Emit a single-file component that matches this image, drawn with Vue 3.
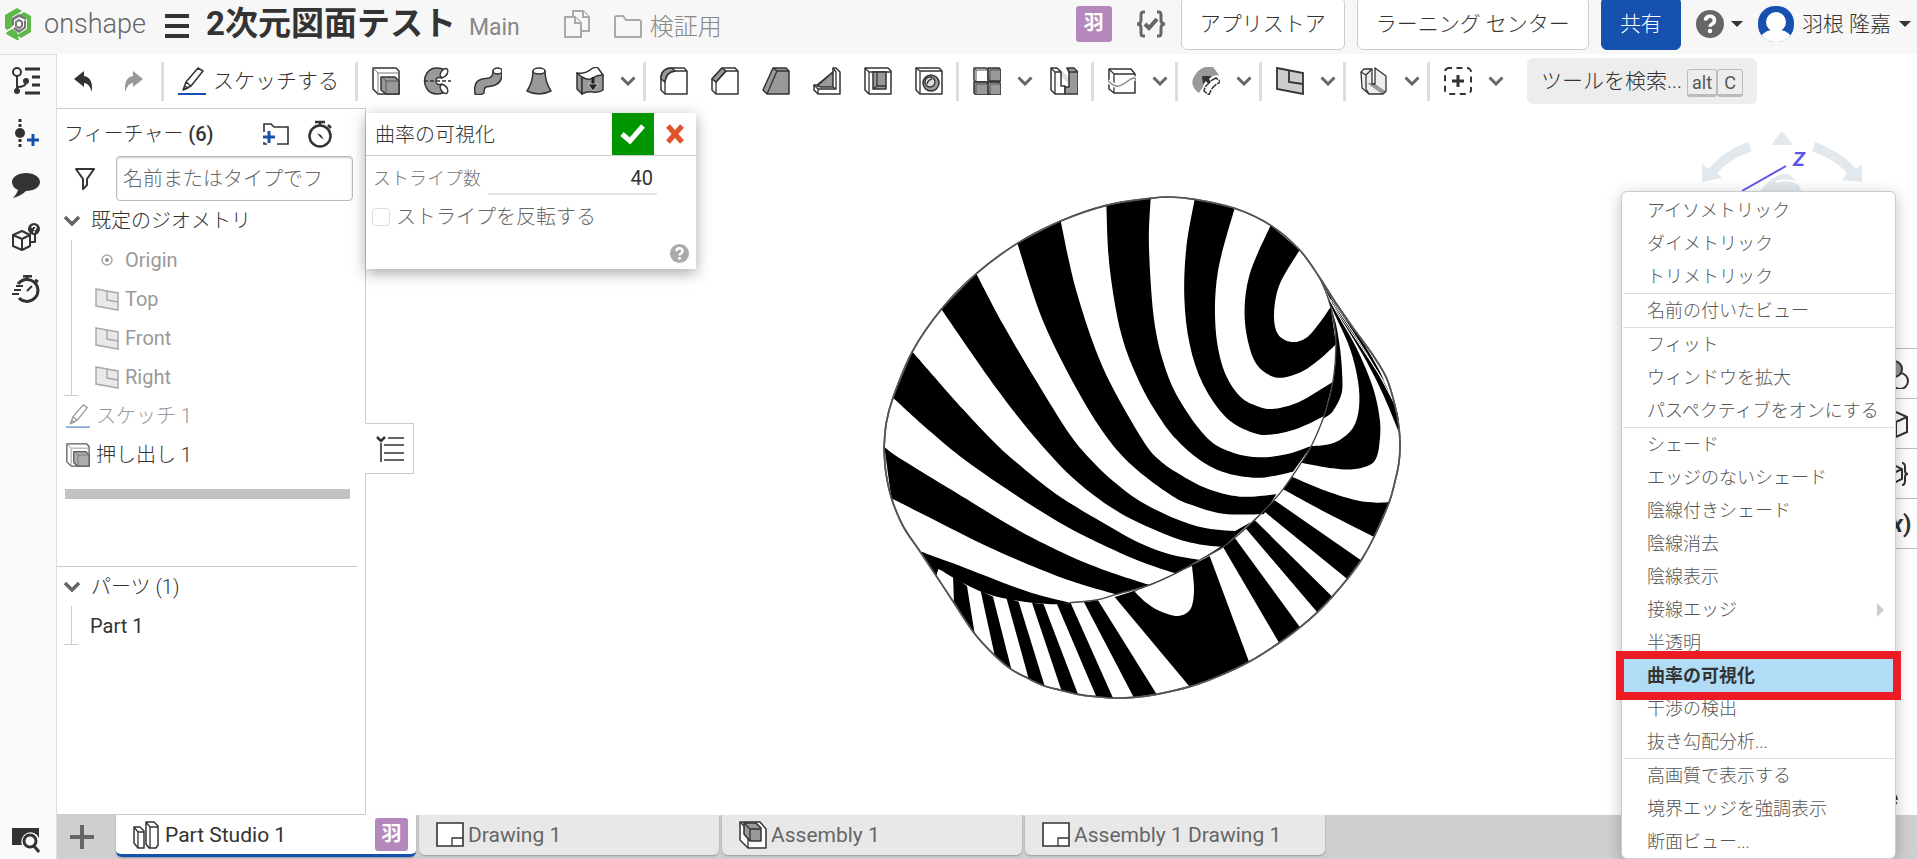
<template>
  <div class="app">
    <header class="topbar">
      <a href="#" class="brand" aria-label="onshape">
        <svg width="30" height="34" viewBox="0 0 30 34" v-html="icons.logo"></svg>
        <span class="brand-name">onshape</span>
      </a>
      <button class="plain burger" aria-label="メニュー">
        <svg width="24" height="24" viewBox="0 0 24 24"><path d="M0 2H24M0 12H24M0 22H24" stroke="#333" stroke-width="4" /></svg>
      </button>
      <h1>2次元図面テスト</h1>
      <span class="branch">Main</span>
      <svg class="copy" width="26" height="28" viewBox="0 0 26 28" v-html="icons.copy"></svg>
      <a href="#" class="folder">
        <svg width="28" height="24" viewBox="0 0 28 24" v-html="icons.folder"></svg>
        検証用
      </a>
      <div class="top-right">
        <span class="badge">羽</span>
        <svg class="braces" width="30" height="28" viewBox="0 0 30 28" v-html="icons.braces"></svg>
        <button class="top-btn store">アプリストア</button>
        <button class="top-btn learn">ラーニング センター</button>
        <button class="top-btn share">共有</button>
        <button class="plain help" aria-label="ヘルプ">
          <svg width="28" height="28" viewBox="0 0 20 20" v-html="icons.help"></svg>
          <i class="caret"></i>
        </button>
        <button class="plain user">
          <svg width="36" height="36" viewBox="0 0 36 36" v-html="icons.user"></svg>
          羽根 隆嘉
          <i class="caret"></i>
        </button>
      </div>
    </header>

    <div class="body">
      <nav class="rail">
        <button v-for="r in rail" :key="r" class="plain rail-btn" :class="{ last: r === 'find' }" :aria-label="r">
          <svg width="28" height="28" viewBox="0 0 28 28" v-html="icons[r]"></svg>
        </button>
      </nav>

      <div class="work">
        <div class="toolbar">
          <button class="plain tool" aria-label="undo"><svg width="28" height="28" viewBox="0 0 28 28" v-html="icons.undo"></svg></button>
          <button class="plain tool faded" aria-label="redo"><svg class="flip" width="28" height="28" viewBox="0 0 28 28" v-html="icons.undo"></svg></button>
          <i class="sep"></i>
          <button class="plain sketch">
            <svg width="28" height="28" viewBox="0 0 28 28" v-html="icons.pencil"></svg>
            スケッチする
          </button>
          <template v-for="(group, g) in tools" :key="g">
            <i class="sep"></i>
            <template v-for="(t, i) in group" :key="i">
              <button v-if="t === 'more'" class="plain more" aria-label="more">
                <svg width="16" height="10" viewBox="0 0 16 10"><path d="M1.5 1.5L8 8L14.5 1.5" fill="none" stroke="#666" stroke-width="3" /></svg>
              </button>
              <button v-else class="plain tool" :aria-label="t">
                <svg width="28" height="28" viewBox="0 0 28 28" v-html="icons[t]"></svg>
              </button>
            </template>
          </template>
          <button class="plain tool-search">ツールを検索... <kbd>alt</kbd><kbd>C</kbd></button>
        </div>

        <div class="stage">
          <aside class="sidebar">
            <div class="feature-head">
              <span>フィーチャー <b>(6)</b></span>
              <button class="plain" aria-label="フォルダを追加"><svg width="28" height="24" viewBox="0 0 28 24" v-html="icons.folderAdd"></svg></button>
              <button class="plain" aria-label="タイマー"><svg width="26" height="28" viewBox="0 0 26 28" v-html="icons.stopwatch"></svg></button>
            </div>
            <div class="filter">
              <svg width="26" height="26" viewBox="0 0 26 26"><path d="M4 3H22L15 13V19L11 23V13Z" fill="none" stroke="#333" stroke-width="2" stroke-linejoin="round" /></svg>
              <input type="text" placeholder="名前またはタイプでフ" aria-label="フィルター" />
            </div>
            <button class="plain tree-head">
              <svg width="18" height="11" viewBox="0 0 18 11" v-html="icons.chevron"></svg>
              既定のジオメトリ
            </button>
            <ul class="branch-list">
              <li v-for="p in geometry" :key="p" class="dim">
                <svg v-if="p === 'Origin'" width="24" height="24" viewBox="0 0 24 24" v-html="icons.origin"></svg>
                <svg v-else width="24" height="24" viewBox="0 0 24 24" v-html="icons.planeSmall"></svg>
                {{ p }}
              </li>
            </ul>
            <ul class="features">
              <li class="dim"><svg class="half" width="24" height="24" viewBox="0 0 28 28" v-html="icons.pencil"></svg>スケッチ 1</li>
              <li><svg class="soft" width="24" height="24" viewBox="0 0 28 28" v-html="icons.extrude"></svg>押し出し 1</li>
            </ul>
            <div class="rollback"></div>
            <section class="parts">
              <button class="plain tree-head">
                <svg width="18" height="11" viewBox="0 0 18 11" v-html="icons.chevron"></svg>
                パーツ (1)
              </button>
              <ul class="branch-list"><li>Part 1</li></ul>
            </section>
            <button class="plain toggle" aria-label="リスト">
              <svg width="28" height="28" viewBox="0 0 28 28"><path d="M1 2L5 6L9 2" fill="none" stroke="#333" stroke-width="2.5" /><path d="M5 8V27M12 3H28M8 10H28M8 18H28M8 25H28" stroke="#333" stroke-width="1.6" /></svg>
            </button>
          </aside>

          <main class="canvas">
            <svg class="model" viewBox="37 42 1560 1512">
              <path :d="closed(outline)" fill="#fff" stroke="#555" stroke-width="5" />
              <path v-for="(s, i) in stripes" :key="'s' + i" :d="band(s[0], s[1])" />
              <polygon v-for="(s, i) in sideStripes" :key="'p' + i" :points="s" />
              <path :d="band(bump[0], bump[1])" fill="#fff" />
              <polygon points="206,1165 250,1190 252,1262 201,1183" fill="#fff" />
              <path :d="open(rim)" fill="none" stroke="#444" stroke-width="4" />
              <path d="M1390 372Q1480 505 1563 632M1383 355Q1500 520 1568 655" fill="none" stroke="#fff" stroke-width="3" />
              <path :d="closed(outline)" fill="none" stroke="#555" stroke-width="5" />
            </svg>

            <form class="dialog" @submit.prevent>
              <div class="dialog-head">
                <span>曲率の可視化</span>
                <button class="ok" aria-label="OK"><svg width="26" height="22" viewBox="0 0 26 22"><path d="M2 11L10 18L23 3" fill="none" stroke="#fff" stroke-width="5" /></svg></button>
                <button class="plain cancel" type="button" aria-label="キャンセル"><svg width="20" height="20" viewBox="0 0 20 20"><path d="M3 2L17 18M17 2L3 18" stroke="#e0522a" stroke-width="5" /></svg></button>
              </div>
              <div class="count">
                <label for="count">ストライプ数</label>
                <input id="count" v-model="count" type="text" />
              </div>
              <div class="invert">
                <input id="invert" v-model="invert" type="checkbox" />
                <label for="invert">ストライプを反転する</label>
              </div>
              <svg class="dialog-help" width="19" height="19" viewBox="0 0 20 20" v-html="icons.help"></svg>
            </form>

            <svg class="viewcube" width="180" height="100" viewBox="0 0 180 100">
              <path d="M90 15L101 29H79Z" fill="#e1e8ee" />
              <path d="M56 26L60 35Q36 44 25 57L30 62L10 66L10 48L17 53Q30 36 56 26Z" fill="#e1e8ee" />
              <path d="M123 26L120 35Q144 44 155 57L150 64L170 66L170 48L164 53Q150 36 123 26Z" fill="#e1e8ee" />
              <path d="M62 84Q78 58 94 58Q106 60 112 84Z" fill="#e1e8ee" />
              <path d="M84 66Q95 62 106 67" fill="none" stroke="#fff" stroke-width="2" />
              <path d="M50 75L94 50" stroke="#5a55e8" stroke-width="2" />
              <text x="101" y="50">Z</text>
            </svg>

            <div class="side-tabs">
              <button v-for="s in ['spheres', 'box', 'boxBrace']" :key="s" class="side-tab" :aria-label="s">
                <svg width="30" height="30" viewBox="0 0 30 30" v-html="icons[s]"></svg>
              </button>
              <button class="side-tab var">(<em>x</em>)</button>
            </div>
            <span class="edge-note">e</span>
          </main>
        </div>

        <footer class="tabs">
          <button class="plain add-tab" aria-label="追加"><svg width="24" height="24" viewBox="0 0 24 24"><path d="M12 0V24M0 12H24" stroke="#666" stroke-width="4" /></svg></button>
          <button v-for="t in tabs" :key="t.name" class="tab" :class="{ active: t.active }">
            <svg width="28" height="28" viewBox="0 0 28 28" v-html="icons[t.icon]"></svg>
            {{ t.name }}
            <span v-if="t.active" class="badge small">羽</span>
          </button>
        </footer>
      </div>
    </div>

    <div class="menu" role="menu">
      <template v-for="(group, g) in menu" :key="g">
        <hr v-if="g > 0" />
        <button v-for="m in group" :key="m" role="menuitem" class="menu-item" :class="{ selected: m === selected, sub: m === '接線エッジ' }" @click="selected = m">{{ m }}</button>
      </template>
    </div>
  </div>
</template>

<script setup>
import { ref } from 'vue'

const count = ref('40')
const invert = ref(false)
const selected = ref('曲率の可視化')

const rail = ['tree', 'addNode', 'comment', 'boxHelp', 'timer', 'find']
const geometry = ['Origin', 'Top', 'Front', 'Right']

const tools = [
  ['extrude', 'revolve', 'sweep', 'loft', 'thicken', 'more'],
  ['fillet', 'chamfer', 'draft', 'rib', 'shell', 'hole'],
  ['pattern', 'more', 'boolean'],
  ['split', 'more'],
  ['surface', 'more'],
  ['plane', 'more'],
  ['sheet', 'more'],
  ['custom', 'more']
]

const tabs = [
  { name: 'Part Studio 1', icon: 'studio', active: true },
  { name: 'Drawing 1', icon: 'drawing' },
  { name: 'Assembly 1', icon: 'assembly' },
  { name: 'Assembly 1 Drawing 1', icon: 'drawing' }
]

const menu = [
  ['アイソメトリック', 'ダイメトリック', 'トリメトリック'],
  ['名前の付いたビュー'],
  ['フィット', 'ウィンドウを拡大', 'パスペクティブをオンにする'],
  ['シェード', 'エッジのないシェード', '陰線付きシェード', '陰線消去', '陰線表示', '接線エッジ', '半透明', '曲率の可視化', '干渉の検出', '抜き勾配分析...'],
  ['高画質で表示する', '境界エッジを強調表示', '断面ビュー...']
]

// smooth curve through points, flat list [x, y, x, y, ...]
const curve = (pts) => {
  const n = pts.length / 2
  const p = (i) => {
    const k = Math.max(0, Math.min(n - 1, i))
    return [pts[k * 2], pts[k * 2 + 1]]
  }
  let d = ''
  for (let i = 0; i < n - 1; i++) {
    const [a, b, c, e] = [p(i - 1), p(i), p(i + 1), p(i + 2)]
    d += `C${b[0] + (c[0] - a[0]) / 6} ${b[1] + (c[1] - a[1]) / 6} ${c[0] - (e[0] - b[0]) / 6} ${c[1] - (e[1] - b[1]) / 6} ${c[0]} ${c[1]}`
  }
  return d
}
const open = (pts) => `M${pts[0]} ${pts[1]}` + curve(pts)
const closed = (pts) => open(pts) + 'Z'
// area between two curves that both start at the outer edge
const band = (a, b) => {
  const r = []
  for (let i = b.length - 2; i >= 0; i -= 2) r.push(b[i], b[i + 1])
  return open(a) + `L${r[0]} ${r[1]}` + curve(r) + 'Z'
}

const outline = [
  43, 800, 50, 725, 70, 650, 128, 512, 215, 385, 320, 278, 443, 187, 573, 120, 710, 73, 843, 52, 900, 48, 975, 55,
  1095, 82, 1203, 133, 1290, 207, 1350, 290, 1400, 368, 1450, 440, 1510, 523, 1550, 590, 1575, 670, 1588, 740,
  1591, 800, 1587, 850, 1575, 905, 1558, 965, 1513, 1068, 1475, 1137, 1432, 1195, 1388, 1247, 1342, 1295,
  1290, 1340, 1228, 1386, 1137, 1443, 1050, 1484, 960, 1517, 860, 1540, 792, 1549, 735, 1551, 680, 1547, 625, 1540,
  575, 1528, 522, 1514, 477, 1493, 425, 1465, 375, 1423, 315, 1358, 252, 1264, 200, 1185, 150, 1110,
  100, 1035, 65, 950, 48, 870, 43, 800
]

const rim = [
  1350, 290, 1375, 350, 1393, 420, 1399, 490, 1390, 600, 1363, 705, 1325, 795, 1295, 845, 1240, 925, 1182, 990,
  1128, 1042, 1060, 1098, 990, 1137, 918, 1177, 840, 1212, 740, 1240, 680, 1257, 600, 1265
]

const stripes = [
  [[155, 1112, 250, 1147, 400, 1205, 500, 1240, 600, 1265], [200, 1185, 206, 1165, 250, 1190, 335, 1232, 410, 1253, 487, 1265, 560, 1270, 603, 1266]],
  [[44, 798, 100, 838, 300, 960, 450, 1050, 600, 1125, 720, 1173, 840, 1212], [65, 952, 200, 1020, 350, 1095, 500, 1160, 620, 1205, 740, 1240]],
  [[128, 512, 280, 685, 370, 780, 435, 840, 560, 940, 700, 1025, 810, 1086, 900, 1120, 990, 1137], [70, 650, 180, 750, 290, 840, 450, 950, 600, 1042, 750, 1115, 850, 1155, 918, 1177]],
  [[320, 278, 400, 430, 500, 600, 600, 760, 665, 838, 730, 900, 810, 960, 910, 1010, 1010, 1042, 1110, 1051], [215, 385, 380, 622, 505, 780, 620, 900, 750, 995, 900, 1065, 980, 1088, 1060, 1098]],
  [[573, 120, 620, 330, 700, 560, 815, 770, 870, 838, 930, 880, 1010, 922, 1110, 947, 1220, 940], [443, 187, 520, 420, 630, 640, 720, 780, 800, 865, 900, 940, 960, 970, 1060, 998, 1182, 1000]],
  [[843, 52, 838, 200, 855, 430, 895, 585, 950, 690, 1020, 778, 1090, 815, 1170, 829, 1250, 820, 1325, 795], [710, 73, 720, 260, 755, 460, 810, 605, 870, 710, 920, 775, 985, 833, 1060, 873, 1150, 890, 1210, 885, 1270, 872]],
  [[975, 55, 950, 200, 944, 350, 960, 490, 1000, 610, 1070, 710, 1150, 755, 1210, 760, 1290, 740, 1363, 705], [1095, 82, 1045, 270, 1037, 430, 1060, 560, 1110, 645, 1170, 678, 1215, 683, 1290, 662, 1390, 602]],
  [[1203, 133, 1140, 280, 1125, 410, 1150, 530, 1195, 580, 1240, 590, 1300, 570, 1350, 535, 1399, 490], [1290, 207, 1230, 310, 1213, 400, 1225, 460, 1265, 483, 1310, 470, 1350, 425, 1383, 378]],
  // side wall, right hand part
  [[1383, 378, 1399, 430, 1412, 510, 1418, 590, 1415, 640, 1390, 690, 1363, 712], [1383, 378, 1399, 490, 1390, 600, 1363, 705]],
  [[1370, 340, 1388, 385, 1440, 500, 1465, 600, 1468, 680, 1450, 740, 1405, 780, 1360, 793, 1325, 795], [1370, 340, 1400, 395, 1460, 500, 1510, 620, 1531, 720, 1529, 790, 1520, 830, 1500, 852, 1450, 865, 1390, 862, 1295, 845]],
  [[1360, 310, 1400, 390, 1440, 455, 1490, 540, 1540, 640, 1587, 752], [1360, 310, 1410, 390, 1480, 485, 1530, 570, 1560, 640, 1585, 700]],
  [[1268, 888, 1370, 930, 1460, 958, 1520, 965, 1558, 963], [1240, 925, 1370, 995, 1513, 1067]]
]

const sideStripes = [
  '1215,958 1473,1137 1432,1193 1182,990',
  '1155,1017 1388,1247 1342,1293 1128,1042',
  '1095,1070 1292,1340 1228,1385 1060,1098',
  '990,1137 1060,1098 1128,1042 1095,1070',
  '1060,1098 1182,990 1215,958 1155,1017 1095,1051',
  '1020,1125 1138,1442 1050,1485 960,1517 735,1248 800,1228 918,1177',
  '685,1258 860,1538 792,1549 643,1264',
  '603,1266 730,1551 680,1547 562,1270',
  '522,1270 625,1540 575,1528 487,1265',
  '447,1262 525,1515 477,1493 410,1250',
  '370,1247 425,1465 375,1423 333,1230',
  '292,1215 315,1358 252,1264 250,1185',
  '155,1112 210,1140 206,1165 200,1185'
]

const bump = [[795, 1232, 840, 1212, 918, 1177, 967, 1155], [795, 1232, 830, 1265, 870, 1290, 925, 1305, 962, 1285, 973, 1230, 967, 1155]]

// icon bodies; most are drawn on a 28 x 28 grid
const ln = 'fill="none" stroke="#333" stroke-width="1.3" stroke-linejoin="round"'
const wh = 'fill="#fff" stroke="#333" stroke-width="1.5" stroke-linejoin="round"'
const gr = 'fill="#999" stroke="#333" stroke-width="1.5" stroke-linejoin="round"'
const icons = {
  logo: '<path d="M13 1L18 4L8 10V20L3 23L1 21V8ZM20 5L27 9V25L17 31L13 28L23 22V12L15 8ZM3 25L8 22L13 25L15 33L13 33L2 27Z" fill="#5cb947"/><path d="M8 11L15 7L22 11V13L15 10L10 13V18L8 19ZM22 14V21L15 26L9 22L11 20L15 23L20 20V13Z" fill="#777"/><path d="M15 13L18 15V19L15 21L12 19V15Z" fill="#fff" stroke="#777" stroke-width="2"/>',
  copy: '<g fill="#f7f7f7" stroke="#aaa" stroke-width="2"><path d="M9 7V1H19L25 7V21H17"/><path d="M19 1V7H25"/><path d="M1 7H11L17 13V27H1Z"/><path d="M11 7V13H17"/></g>',
  folder: '<path d="M1 22V3Q1 1 3 1H9L12 5H25Q27 5 27 7V22Z" fill="none" stroke="#aaa" stroke-width="2" stroke-linejoin="round"/>',
  braces: '<path d="M9 2H7Q5 2 5 5V10Q5 14 1 14Q5 14 5 18V23Q5 26 7 26H9M21 2H23Q25 2 25 5V10Q25 14 29 14Q25 14 25 18V23Q25 26 23 26H21" fill="none" stroke="#666" stroke-width="3"/><path d="M9 14L13 18L21 9" fill="none" stroke="#666" stroke-width="4"/>',
  help: '<circle cx="10" cy="10" r="10" fill="currentColor"/><path d="M6.800 7.500Q7 4.500 10 4.500T13.200 7.300Q13.200 9 11.500 10Q10 10.800 10 12" fill="none" stroke="#fff" stroke-width="2.600"/><circle cx="10" cy="15" r="1.600" fill="#fff"/>',
  user: '<clipPath id="uc"><rect width="36" height="36" rx="17"/></clipPath><g clip-path="url(#uc)"><rect width="36" height="36" fill="#1651b0"/><circle cx="18" cy="16" r="10" fill="#fff"/><path d="M1 36Q4 25 13 24H23Q32 25 35 36Z" fill="#fff"/></g>',
  undo: '<path d="M5 12L15 4V9Q24 10 23 25Q20 16 15 16V20Z" fill="#333"/>',
  pencil: '<path d="M5 23L8 15L20 1L25 4L13 19ZM8 15L13 19M5 23L7 19L10 21Z" fill="none" stroke="#333" stroke-width="1.5" stroke-linejoin="round"/><path d="M0 27H28" stroke="#1651b0" stroke-width="2"/>',
  chevron: '<path d="M2 2L9 9L16 2" fill="none" stroke="#666" stroke-width="3.500"/>',
  extrude: `<path d="M1 1H24L27 4V27H6L1 22Z" ${wh}/><path d="M1 1L6 6H27M6 6V27" fill="none" stroke="#777" stroke-width="1"/><path d="M9 10H23L27 14V27H14L9 23Z" ${gr}/><path d="M10 10L14 14H27M14 14V27" fill="none" stroke="#555" stroke-width="1"/>`,
  revolve: `<path d="M20 2Q9 -1 4 6Q-1 14 4 22Q9 29 20 26L24 21L19 17Q13 19 13 14T19 11L24 7Z" ${gr}/><ellipse cx="21" cy="6" rx="3" ry="5" transform="rotate(35 21 6)" ${wh}/><ellipse cx="21" cy="22" rx="3" ry="5" transform="rotate(-35 21 22)" ${wh}/><path d="M1 14H28" stroke="#333" stroke-width="1.5" stroke-dasharray="4 2"/>`,
  sweep: `<path d="M1 27Q-1 14 8 12L15 11Q19 10 19 4L28 4Q29 17 18 19L12 20Q10 21 10 26Q6 29 1 27Z" ${gr}/><ellipse cx="23.500" cy="4" rx="4.500" ry="3" ${wh}/>`,
  loft: `<path d="M8 4Q8 15 2 24Q14 30 26 24Q20 15 20 4Z" ${gr}/><ellipse cx="14" cy="4" rx="6" ry="3" ${wh}/>`,
  thicken: `<path d="M1 6L6 10V27L1 22Z" ${gr}/><path d="M6 10Q14 13 19 9T27 8V23Q23 26 17 25T6 27Z" ${gr}/><path d="M1 6Q9 7 14 3T22 1L27 8Q21 8 17 11T6 10Z" ${wh}/><path d="M17 10V19" stroke="#222" stroke-width="3"/><path d="M12 17H22L17 24Z" fill="#222" stroke="#fff" stroke-width=".6"/>`,
  fillet: `<path d="M1 10Q2 1 12 1H24L27 4V27H5L1 23Z" ${wh}/><path d="M1 10Q2 1 12 1L15 4Q6 5 5 15L1 12Z" ${gr}/><path d="M5 27V15Q6 5 15 4H27" ${ln}/>`,
  chamfer: `<path d="M1 12L11 1H24L27 4V27H5L1 23Z" ${wh}/><path d="M1 12L11 1L15 4L5 15Z" ${gr}/><path d="M5 27V15L15 4H27" ${ln}/>`,
  draft: `<path d="M1 23L11 1H24L27 4V27H5Z" ${gr}/><path d="M11 1L15 4H27M15 4L5 27" ${ln}/>`,
  rib: `<path d="M20 1H23L27 5V27H5L1 23V18H4L20 5Z" ${wh}/><path d="M4 19L20 5V20H8Z" ${gr}/><path d="M20 1L23 5V22H5M1 18L5 22V27M23 22L20 20" ${ln}/>`,
  shell: `<path d="M1 1H24L27 4V27H5L1 23Z" ${wh}/><path d="M1 1L5 5H27M5 5V27" ${ln}/><path d="M9 5H22V22H9Z" ${gr}/><path d="M13 5V19H22M13 19L9 22" ${ln}/>`,
  hole: `<path d="M1 1H24L27 4V27H5L1 23Z" ${wh}/><path d="M1 1L5 4H27M5 4V27" ${ln}/><circle cx="16" cy="16" r="8" ${gr}/><circle cx="15" cy="15" r="5" fill="#ddd" stroke="#333" stroke-width="1.3"/><path d="M12 17Q13 13 17 12" ${ln}/>`,
  pattern: `<path d="M1 1H13L15 3V15H3L1 13Z" ${wh}/><path d="M15 1H26L28 3V14H17L15 12ZM1 15H13L15 17V28H3L1 26ZM15 15H26L28 17V28H17L15 26Z" ${gr}/><path d="M1 1L3 3H15M3 3V15M17 3H28M17 3V14M3 17H15M3 17V28M17 17H28M17 17V28" fill="none" stroke="#555" stroke-width="1"/>`,
  boolean: `<path d="M9 1L20 12V18L9 7Z" fill="#ddd"/><path d="M1 1H7L11 5V19H15V27H5L1 23Z" ${wh}/><path d="M1 1L5 5H11M5 5V27" ${ln}/><path d="M17 1H24L28 5V27H15V20H19V5Z" ${gr}/><path d="M17 1L19 5H28" ${ln}/>`,
  split: `<path d="M1 2H23L27 7V26H6L1 22Z" ${wh}/><path d="M1 2L6 7H27M6 7V26" ${ln}/><path d="M0 14Q4 18 8 19T20 14T28 14" fill="none" stroke="#fff" stroke-width="4"/><path d="M0 14Q4 18 8 19T20 14T28 14" fill="none" stroke="#888" stroke-width="1.5"/>`,
  surface: `<path d="M7 26Q-4 18 3 8Q9 -2 21 0L27 8Q15 9 13 15T7 26Z" fill="#999"/><path d="M10 9H20L17 12L22 19L19 21L14 14L11 17Z" fill="#333"/><path d="M20 13L24 11L29 15Q20 18 17 28L12 24Q13 19 16 17Z" fill="#fff" stroke="#333" stroke-width="1.5" stroke-dasharray="7 1"/>`,
  plane: `<path d="M1 1L27 6V27L1 22Z" fill="#ccc" stroke="#333" stroke-width="1.800"/><path d="M13 3V15L27 17" fill="none" stroke="#333" stroke-width="1.800"/>`,
  planeSmall: '<path d="M1 2L23 6V23L1 19Z" fill="#e9e9e9" stroke="#aaa" stroke-width="1.500"/><path d="M12 4V13L23 15" fill="none" stroke="#aaa" stroke-width="1.500"/>',
  origin: '<circle cx="12" cy="12" r="5" fill="none" stroke="#aaa" stroke-width="1.500"/><circle cx="12" cy="12" r="2" fill="#999"/>',
  sheet: `<path d="M3 4L7 1H12V16L25 26L22 27H9L2 21Z" fill="#eee"/><path d="M7 16H14L27 25L22 27Z" fill="#999"/><path d="M15 1L26 9V24L15 16Z" fill="#eee"/><path d="M1 5L4 2H12V17H15V1L26 9V24L23 27H9L2 21Z" ${ln}/><path d="M1 5L6 8V22L9 27M6 8L12 2" ${ln}/>`,
  custom: '<rect x="1" y="1" width="26" height="26" rx="4" fill="none" stroke="#333" stroke-width="2" stroke-dasharray="6 4.500" stroke-dashoffset="3"/><path d="M14 8V20M8 14H20" stroke="#333" stroke-width="3"/>',
  tree: '<g fill="none" stroke="#333" stroke-width="2"><circle cx="5" cy="5" r="4"/><path d="M5 9V24M5 20Q14 20 14 15"/></g><circle cx="5" cy="24" r="3" fill="#333"/><circle cx="14" cy="14" r="3" fill="#333"/><path d="M13 2H28M20 10H28M20 18H28M13 26H28" stroke="#333" stroke-width="3"/>',
  addNode: '<path d="M8 0V28" stroke="#333" stroke-width="3" stroke-dasharray="3 2"/><circle cx="8" cy="14" r="5" fill="#333"/><path d="M21 15V27M15 21H27" stroke="#1651b0" stroke-width="3"/>',
  comment: '<path d="M14 2C22 2 28 6 28 11S22 20 14 20Q9 25 1 27Q5 23 6 19Q0 16 0 11C0 6 6 2 14 2Z" fill="#333"/>',
  boxHelp: '<path d="M1 12L10 8L18 12V23L10 27L1 23ZM1 12L10 16L18 12M10 16V27M18 19H23V10" fill="none" stroke="#333" stroke-width="2" stroke-linejoin="round"/><circle cx="22" cy="6" r="6" fill="#333"/><path d="M20 5Q20 3 22 3T24 5Q24 6 22 7" fill="none" stroke="#fff" stroke-width="1.500"/><circle cx="22" cy="9" r="1" fill="#fff"/>',
  timer: '<path d="M6 9A11 11 0 1 1 7 23" fill="none" stroke="#333" stroke-width="3"/><path d="M11 1H20M15 1V5M23 5L26 7" stroke="#333" stroke-width="3"/><path d="M4 11H11M2 15H9M0 19H7M15 16L20 11" stroke="#333" stroke-width="2"/>',
  find: '<path d="M0 3H27V13A9 9 0 0 0 10 20H0Z" fill="#333"/><circle cx="18" cy="16" r="6" fill="none" stroke="#333" stroke-width="3"/><path d="M22 21L27 27" stroke="#333" stroke-width="3"/>',
  folderAdd: '<path d="M3 10V2H10L13 5H27V22H16M3 20V22H6" fill="none" stroke="#333" stroke-width="1.6"/><path d="M8 9V21M2 15H14" stroke="#1651b0" stroke-width="3"/>',
  stopwatch: '<circle cx="13" cy="16" r="10.500" fill="none" stroke="#333" stroke-width="2.500"/><path d="M8 2H18M13 2V6M21 5L24 8" stroke="#333" stroke-width="2.500"/><path d="M10 13L14 15L17 20L13 17Z" fill="#333"/>',
  studio: `<path d="M1 6H7L11 10V27H5L1 22Z" ${wh}/><path d="M1 6L5 11H11M5 11V27" ${ln}/><path d="M13 1H21L25 5V24L23 27H16L13 23Z" ${wh}/><path d="M13 1L17 6H25M17 6V27" ${ln}/>`,
  drawing: `<path d="M1 2H27V25H1Z" fill="#fff" stroke="#333" stroke-width="1.6"/><path d="M16 25V17H27" ${ln}/>`,
  assembly: `<path d="M1 1H21L27 8V27H9L1 19Z" ${wh}/><path d="M1 1L9 9V27" ${ln}/><path d="M5 2H17L22 7V20H11L5 13Z" ${gr}/><path d="M5 2L11 8H22M11 8V20" ${ln}/>`,
  spheres: '<circle cx="18" cy="22" r="8" fill="#fff" stroke="#333" stroke-width="2"/><circle cx="12" cy="10" r="8" fill="#999" stroke="#333" stroke-width="2"/>',
  box: '<path d="M3 8L14 3L25 8V23L14 28L3 23ZM3 8L14 13L25 8M14 13V28" fill="#fff" stroke="#333" stroke-width="2"/>',
  boxBrace: '<path d="M4 10L12 6L20 10V20L12 24L4 20ZM4 10L12 14L20 10M12 14V24M20 4Q23 4 23 8V12Q23 15 26 15Q23 15 23 18V22Q23 26 20 26" fill="none" stroke="#333" stroke-width="2"/>'
}
</script>

<style>
body {
  overflow: hidden;
}
</style>

<style scoped>
* {
  box-sizing: border-box;
}

.app {
  position: relative;
  display: flex;
  flex-direction: column;
  height: 100vh;
  background: #fff;
  color: #333;
  font-family: Roboto, "Noto Sans CJK JP", sans-serif;
  font-size: 20px;
  font-weight: 300;
  line-height: 30px;
}

button,
input {
  font: inherit;
  color: inherit;
}

svg {
  flex: none;
  display: block;
}

ul {
  list-style: none;
  margin: 0;
  padding: 0;
}

.plain {
  display: flex;
  align-items: center;
  border: 0;
  padding: 0;
  background: none;
  white-space: nowrap;
}

/* Header */
.topbar {
  display: flex;
  flex: none;
  align-items: center;
  height: 54px;
  padding: 0 6px 6px 4px;
  background: #f7f7f7;
  white-space: nowrap;
}

.brand {
  display: flex;
  align-items: center;
  gap: 10px;
  color: #666;
  text-decoration: none;
}

.brand-name {
  width: 104px;
  font-size: 27px;
}

.burger {
  margin: 4px 17px 0;
}

h1 {
  margin: 0;
  font-size: 33px;
  font-weight: 700;
}

.branch {
  margin: 8px 0 0 13px;
  color: #888;
  font-size: 23px;
  font-weight: 400;
}

.copy {
  margin-left: 44px;
}

.folder {
  display: flex;
  align-items: center;
  gap: 8px;
  margin: 6px 0 0 24px;
  color: #888;
  font-size: 24px;
  text-decoration: none;
}

.top-right {
  display: flex;
  align-items: center;
  margin-left: auto;
  height: 54px;
  font-size: 21px;
}

.badge {
  width: 36px;
  height: 36px;
  border-radius: 3px;
  background: #b588bd;
  color: #fff;
  font-size: 20px;
  font-weight: 700;
  line-height: 34px;
  text-align: center;
}

.badge.small {
  width: 33px;
  height: 33px;
  margin-left: auto;
  line-height: 32px;
}

.braces {
  margin: 0 15px 0 24px;
}

.top-btn {
  align-self: flex-start;
  height: 53px;
  margin-right: 12px;
  padding: 0 18px;
  border: 1px solid #ccc;
  border-radius: 6px;
  background: #fff;
}

.top-btn.share {
  margin-right: 15px;
  border-color: #1651b0;
  background: #1651b0;
  color: #fff;
}

.help {
  gap: 7px;
  margin-right: 15px;
  color: #666;
}

.user {
  gap: 8px;
}

.caret {
  border: 6px solid transparent;
  border-top-color: #333;
  border-bottom: 0;
}

/* Frame */
.body {
  display: flex;
  flex: 1;
  min-height: 0;
}

.rail {
  display: flex;
  flex: none;
  flex-direction: column;
  width: 57px;
  padding-bottom: 6px;
  border-top: 1px solid #ddd;
  border-right: 1px solid #ddd;
  background: #fafafa;
}

.rail-btn {
  justify-content: center;
  height: 52px;
  padding-right: 4px;
}

.rail-btn.last {
  height: 28px;
  margin-top: auto;
}

.work {
  display: flex;
  flex: 1;
  flex-direction: column;
  min-width: 0;
}

.toolbar {
  display: flex;
  flex: none;
  align-items: center;
  height: 54px;
  font-size: 21px;
}

.tool {
  justify-content: center;
  width: 51px;
}

.faded {
  opacity: 0.5;
}

.flip {
  transform: scaleX(-1);
}

.more {
  justify-content: center;
  width: 26px;
}

.sep {
  width: 3px;
  height: 39px;
  margin: 0 2px;
  background: #ddd;
}

.sketch {
  gap: 7px;
  width: 187px;
  padding-left: 12px;
}

.tool-search {
  height: 46px;
  margin-left: 18px;
  padding: 0 14px;
  border-radius: 6px;
  background: #ededed;
}

kbd {
  height: 28px;
  margin-top: 4px;
  padding: 0 4px;
  border: 1px solid #bbb;
  border-bottom-width: 3px;
  border-radius: 3px;
  font-family: Roboto, sans-serif;
  font-size: 18px;
  font-weight: 400;
  line-height: 26px;
  color: #555;
}

kbd:first-of-type {
  margin-left: 5px;
}

kbd:last-of-type {
  padding: 0 6px;
}

.stage {
  display: flex;
  flex: 1;
  min-height: 0;
}

/* Feature list */
.sidebar {
  position: relative;
  flex: none;
  width: 309px;
  border-top: 1px solid #ccc;
  border-right: 1px solid #ccc;
  border-bottom: 1px solid #ccc;
}

.feature-head {
  display: flex;
  align-items: center;
  height: 47px;
  padding: 2px 32px 0 7px;
  gap: 18px;
}

.feature-head span {
  flex: 1;
}

.feature-head b {
  font-weight: 500;
}

.filter {
  display: flex;
  align-items: center;
  gap: 18px;
  padding: 0 12px 0 15px;
}

.filter input {
  flex: 1;
  min-width: 0;
  height: 45px;
  padding: 0 6px;
  border: 1px solid #bbb;
  border-radius: 4px;
  background: #fff;
  box-shadow: inset 0 1px 2px #ccc;
}

.filter input::placeholder {
  color: #666;
}

.tree-head {
  gap: 10px;
  height: 39px;
  padding-left: 6px;
}

.branch-list {
  position: relative;
  margin-left: 14px;
  border-left: 1px solid #ccc;
}

.branch-list::after {
  content: "";
  position: absolute;
  left: -8px;
  bottom: 0;
  width: 14px;
  border-bottom: 1px solid #ccc;
}

.branch-list li,
.features li {
  display: flex;
  align-items: center;
  gap: 6px;
  height: 39px;
}

.branch-list li {
  padding-left: 23px;
  font-weight: 400;
}

.parts .branch-list li {
  padding-left: 18px;
}

.features li {
  padding-left: 9px;
}

.dim {
  color: #999;
}

.half {
  opacity: 0.5;
}

.soft {
  opacity: 0.8;
}

.rollback {
  height: 10px;
  margin: 15px 15px 67px 8px;
  background: #c2c2c2;
}

.parts {
  margin-right: 8px;
  border-top: 1px solid #ccc;
}

.toggle {
  position: absolute;
  top: 314px;
  left: 100%;
  z-index: 2;
  justify-content: center;
  width: 49px;
  height: 51px;
  border: 1px solid #ccc;
  border-left-color: #fff;
  background: #fff;
}

/* Drawing area */
.canvas {
  position: relative;
  display: flex;
  flex: 1;
  align-items: center;
  justify-content: center;
  min-width: 0;
  padding-bottom: 30px;
}

.model {
  width: 520px;
}

.dialog {
  position: absolute;
  top: 5px;
  left: 0;
  width: 330px;
  height: 156px;
  background: #fff;
  box-shadow: 0 4px 14px rgba(0, 0, 0, 0.35);
}

.dialog-head {
  display: flex;
  height: 43px;
  padding-left: 9px;
  border-bottom: 1px solid #ccc;
  line-height: 44px;
}

.dialog-head span {
  flex: 1;
}

.ok {
  width: 42px;
  padding: 0 8px;
  border: 0;
  background: #009600;
}

.cancel {
  justify-content: center;
  width: 42px;
}

.count {
  display: flex;
  align-items: center;
  gap: 7px;
  height: 46px;
  padding: 0 39px 0 7px;
  color: #777;
}

.count label {
  font-size: 18px;
}

.count input {
  flex: 1;
  min-width: 0;
  height: 32px;
  padding: 0 4px;
  border: 0;
  border-bottom: 2px solid #e4e4e4;
  color: #333;
  font-weight: 400;
  text-align: right;
}

.invert {
  display: flex;
  align-items: center;
  gap: 6px;
  padding: 0 6px;
  color: #666;
}

.invert input {
  appearance: none;
  width: 18px;
  height: 18px;
  margin: 0;
  border: 1px solid #ddd;
  border-radius: 4px;
}

.dialog-help {
  margin: 12px 7px 0 auto;
  color: #aaa;
}

.viewcube {
  position: absolute;
  top: 8px;
  right: 45px;
}

.viewcube text {
  fill: #5a55e8;
  font-size: 20px;
  font-style: italic;
  font-weight: 700;
}

.side-tabs {
  position: absolute;
  top: 240px;
  right: 0;
  width: 40px;
  border-top: 1px solid #bbb;
}

.side-tab {
  display: flex;
  align-items: center;
  justify-content: center;
  width: 100%;
  height: 50px;
  padding: 0;
  border: 0;
  border-bottom: 1px solid #bbb;
  background: #fff;
}

.var {
  font-size: 24px;
  font-weight: 700;
}

.edge-note {
  position: absolute;
  right: 19px;
  bottom: 2px;
  font-weight: 700;
}

/* Document tabs */
.tabs {
  display: flex;
  flex: none;
  gap: 3px;
  height: 44px;
  background: #cfcfcf;
}

.add-tab {
  justify-content: center;
  width: 56px;
  padding-right: 6px;
}

.tab {
  display: flex;
  align-items: center;
  gap: 4px;
  width: 300px;
  height: 40px;
  padding: 0 8px 0 17px;
  border: 0;
  border-radius: 0 0 6px 6px;
  background: #e8e8e8;
  box-shadow: 0 1px 2px #999;
  color: #666;
  font-size: 21px;
  font-weight: 400;
}

.tab.active {
  height: 42px;
  border-bottom: 3px solid #1651b0;
  background: #fff;
  color: #333;
}

/* View menu */
.menu {
  position: absolute;
  right: 21px;
  bottom: 0;
  z-index: 5;
  width: 275px;
  padding-top: 2px;
  border: 1px solid #ccc;
  border-radius: 6px;
  background: #fff;
  box-shadow: 0 4px 16px rgba(0, 0, 0, 0.25);
}

.menu hr {
  height: 1px;
  margin: 0 1px;
  border: 0;
  background: #ddd;
}

.menu-item {
  position: relative;
  display: flex;
  align-items: center;
  justify-content: space-between;
  width: 100%;
  height: 33px;
  padding: 0 11px 0 25px;
  border: 0;
  background: none;
  color: #555;
  font-size: 18px;
  white-space: nowrap;
}

.menu-item.sub::after {
  content: "";
  border: 7px solid transparent;
  border-left-color: #ccc;
  border-right: 0;
}

.menu-item.selected {
  z-index: 1;
  background: #b0ddf5;
  color: #333;
  font-weight: 700;
}

.menu-item.selected::before {
  content: "";
  position: absolute;
  inset: -8px -6px;
  border: 8px solid #ed1c24;
}
</style>
